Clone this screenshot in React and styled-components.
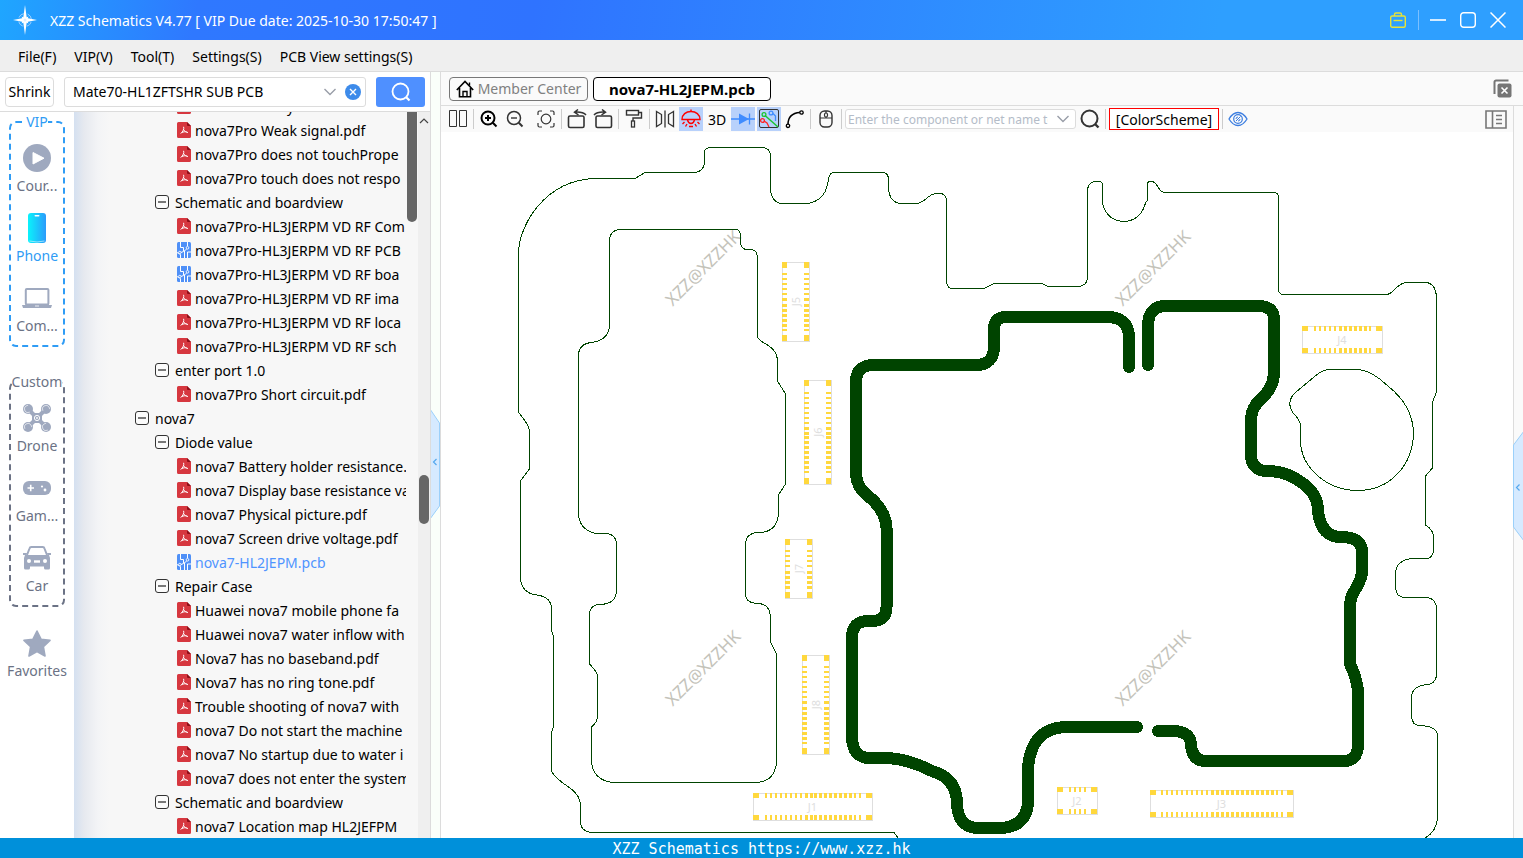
import React from "react";
import styled, { createGlobalStyle, css } from "styled-components";

const GlobalStyle = createGlobalStyle`
  *, *::before, *::after { box-sizing: border-box; }
  body { margin: 0; background: #fff; }
  body, button, input { font-family: "Noto Sans", "Open Sans", sans-serif; font-size: 14px; color: #000; }
  button { padding: 0; border: 0; background: none; cursor: pointer; }
  svg { display: block; flex: none; }
`;

const Page = styled.div`
  display: flex;
  flex-direction: column;
  height: 100vh;
  overflow: hidden;
`;

const TitleBar = styled.header`
  flex: none;
  display: flex;
  align-items: center;
  gap: 12px;
  height: 40px;
  padding: 0 16px 0 12px;
  color: #fff;
  background: linear-gradient(100deg, #1fa6ff 0%, #2f78ff 13%, #2f73ff 35%, #2e9fff 80%, #2e9fff 100%);
`;

const Title = styled.h1`
  flex: 1;
  margin: 0;
  font-size: 14px;
  font-weight: 400;
  white-space: nowrap;
`;

const WindowButtons = styled.div`
  display: flex;
  align-items: center;
  gap: 12px;
`;

const WindowButton = styled.button`
  display: grid;
  place-items: center;
  width: 18px;
  height: 20px;
`;

const WindowDivider = styled.span`
  width: 1px;
  height: 20px;
  margin: 0 -2px 0 -1px;
  background: #7cc0ff;
`;

const MenuBar = styled.nav`
  flex: none;
  display: flex;
  align-items: center;
  gap: 18px;
  height: 32px;
  padding: 2px 18px 0;
  background: #efefef;
  border-bottom: 1px solid #dcdcdc;
`;

const MenuItem = styled.button`
  white-space: nowrap;
`;

const Main = styled.div`
  flex: 1;
  display: flex;
  min-height: 0;
`;

const Sidebar = styled.aside`
  flex: none;
  display: flex;
  flex-direction: column;
  width: 431px;
  border-right: 1px solid #dcdcdc;
`;

const SearchRow = styled.div`
  flex: none;
  display: flex;
  align-items: center;
  gap: 10px;
  height: 40px;
  padding: 0 5px;
  border-bottom: 1px solid #dcdcdc;
`;

const ShrinkButton = styled.button`
  width: 49px;
  height: 30px;
  border: 1px solid #dcdcdc;
  border-radius: 4px;
`;

const ComboBox = styled.div`
  display: flex;
  align-items: center;
  border: 1px solid #dcdcdc;
  border-radius: 3px;
  background: #fff;
  ${(p) =>
    p.$small
      ? css`width: 231px; height: 20px; padding: 0 5px 0 2px; gap: 8px;`
      : css`flex: 1; height: 30px; padding: 0 4px 0 8px; gap: 8px;`}
`;

const ComboInput = styled.input`
  flex: 1;
  min-width: 0;
  padding: 0;
  border: 0;
  outline: 0;
  background: none;
  font-size: ${(p) => (p.$small ? "12px" : "14px")};
  &::placeholder { color: #b4bcc8; opacity: 1; }
`;

const SearchButton = styled.button`
  display: grid;
  place-items: center;
  width: 49px;
  height: 30px;
  border-radius: 3px;
  background: #4f90ff;
`;

const SidebarBody = styled.div`
  flex: 1;
  display: flex;
  min-height: 0;
`;

const Categories = styled.nav`
  flex: none;
  display: flex;
  flex-direction: column;
  align-items: center;
  width: 74px;
`;

const CategoryGroup = styled.fieldset`
  width: 56px;
  min-width: 0;
  margin: 0 0 25px;
  padding: 8px 0 9px;
  border: 2px dashed ${(p) => (p.$active ? "#2f9cf5" : "#6b7285")};
  border-radius: 7px;
  & + & { margin-bottom: 18px; }
`;

const CategoryTitle = styled.legend`
  margin: 0 auto;
  padding: 0;
  line-height: 20px;
  color: ${(p) => (p.$active ? "#2f9cf5" : "#6b7285")};
`;

const CategoryItems = styled.div`
  display: flex;
  flex-direction: column;
  align-items: center;
  gap: 14px;
`;

const Category = styled.button`
  display: flex;
  flex-direction: column;
  align-items: center;
  color: ${(p) => (p.$active ? "#2f9cf5" : "#6b7285")};
  line-height: 20px;
  white-space: nowrap;
`;

const CategoryIcon = styled.span`
  display: grid;
  place-items: center;
  height: 36px;
`;

const TreePane = styled.div`
  flex: 1;
  display: flex;
  min-width: 0;
  overflow: hidden;
  background: linear-gradient(90deg, #d4e0f0 0, #e6e9ef 10px, #f3f4f6 24px, #f7f7f7 36px);
`;

const Tree = styled.ul`
  flex: 1;
  min-width: 0;
  margin: -18px 0 0;
  padding: 0;
  list-style: none;
  overflow: hidden;
`;

const TreeRow = styled.li`
  padding-left: ${(p) => 61 + p.$level * 20 + (p.$level === 2 ? 2 : 0)}px;
  overflow: hidden;
`;

const TreeNode = styled.button`
  display: flex;
  align-items: center;
  gap: ${(p) => (p.$leaf ? 4 : 6)}px;
  height: 24px;
  white-space: nowrap;
  color: ${(p) => (p.$selected ? "#4f94ff" : "#000")};
`;

const InnerScroll = styled.div`
  flex: none;
  width: 12px;
  padding-left: 1px;
`;

const InnerThumb = styled.div`
  width: 10px;
  height: 110px;
  border-radius: 0 0 5px 5px;
  background: #666;
`;

const OuterScroll = styled.div`
  flex: none;
  display: flex;
  flex-direction: column;
  align-items: center;
  width: 12px;
  padding-top: 6px;
  background: #efefef;
`;

const OuterThumb = styled.div`
  width: 10px;
  height: 49px;
  margin-top: 351px;
  border-radius: 5px;
  background: #666;
`;

const Splitter = styled.div`
  flex: none;
  display: flex;
  align-items: center;
  width: 9px;
  padding-top: 18px;
  background: #fafffa;
`;

const Workspace = styled.main`
  flex: 1;
  display: flex;
  flex-direction: column;
  min-width: 0;
  border-left: 1px solid #dcdcdc;
`;

const TabBar = styled.div`
  flex: none;
  display: flex;
  align-items: center;
  gap: 5px;
  height: 34px;
  padding: 0 11px 0 8px;
  background: #fafafa;
  border-bottom: 1px solid #dcdcdc;
`;

const Tab = styled.button`
  display: flex;
  align-items: center;
  justify-content: center;
  gap: 4px;
  width: ${(p) => (p.$active ? 178 : 139)}px;
  height: 24px;
  border: 1px solid ${(p) => (p.$active ? "#000" : "#777")};
  border-radius: 4px;
  background: ${(p) => (p.$active ? "#fff" : "none")};
  color: ${(p) => (p.$active ? "#000" : "#808080")};
  font-size: ${(p) => (p.$active ? 15 : 14)}px;
  font-weight: ${(p) => (p.$active ? 700 : 400)};
  white-space: nowrap;
`;

const Spacer = styled.span`
  flex: 1;
`;

const BoardArea = styled.div`
  flex: 1;
  display: flex;
  min-height: 0;
`;

const BoardColumn = styled.div`
  flex: 1;
  display: flex;
  flex-direction: column;
  min-width: 0;
`;

const ToolBar = styled.div`
  flex: none;
  display: flex;
  align-items: center;
  gap: 2px;
  height: 26px;
  padding: 0 5px;
  background: #fafafa;
`;

const Tool = styled.button`
  display: grid;
  place-items: center;
  width: 24px;
  height: 24px;
  background: ${(p) => (p.$on ? "#b8d1fb" : "none")};
`;

const Separator = styled.span`
  width: 1px;
  height: 20px;
  margin: 0 1px;
  background: ${(p) => (p.$blank ? "none" : "#ccc")};
`;

const SchemeButton = styled.button`
  width: 110px;
  height: 22px;
  border: 1px solid #f00;
  background: #fff;
`;

const Board = styled.svg`
  flex: 1;
  width: 100%;
  min-height: 0;
  background: #fff;
`;

const RightGutter = styled.div`
  flex: none;
  display: flex;
  align-items: center;
  width: 10px;
  padding-top: 28px;
  background: #fafafa;
  box-shadow: inset 1px 0 #dcdcdc;
`;

const Footer = styled.footer`
  flex: none;
  height: 20px;
  background: #0090da;
  color: #fff;
  font: 15px/22px "DejaVu Sans Mono", monospace;
  text-align: center;
`;

/* ---------- icons ---------- */

const Svg = ({ w, h = w, children, ...rest }) => (
  <svg width={w} height={h} viewBox={`0 0 ${w} ${h}`} fill="none" aria-hidden="true" {...rest}>
    {children}
  </svg>
);

const Logo = () => (
  <Svg w={26} h={30}>
    <circle cx="13" cy="15" r="6.5" stroke="#9fd0ff" strokeWidth="1" strokeDasharray="6 4.2" strokeDashoffset="-2" />
    <path d="M13 0L14.8 12.9L25 15L14.8 17.1L13 30L11.2 17.1L1 15L11.2 12.9Z" fill="#fff" />
    <path d="M9.5 11.5L13 13L16.5 11.5L15 15L16.5 18.5L13 17L9.5 18.5L11 15Z" fill="#fff" />
    <circle cx="13" cy="15" r="1.5" fill="#d8ecff" />
  </Svg>
);

const PdfIcon = () => (
  <Svg w={14} h={16}>
    <path d="M1.5 0H10L14 4V14.5A1.5 1.5 0 0 1 12.5 16H1.5A1.5 1.5 0 0 1 0 14.5V1.5A1.5 1.5 0 0 1 1.5 0Z" fill="#d6373f" />
    <path d="M10 0L14 4H11A1 1 0 0 1 10 3Z" fill="#8e0f18" />
    <path d="M6.6 4.8C7.3 6.8 6 9.6 3.7 11.6M6.8 7.7C7.4 9.2 9 10.3 11 10.5M4.8 10.6C6.2 9.8 8.2 9.5 9.8 9.9" stroke="#fff" strokeWidth="1" />
  </Svg>
);

const PcbIcon = () => (
  <Svg w={14} h={16}>
    <rect width="14" height="16" rx="1.5" fill="#4f90f7" />
    <path d="M3.5 0V5.5H6.5V9.500L4 10.500M7.500 16V8.500L9.500 7.500M10.500 0V4M10.500 16V10H14M3.500 16V12.500L0 10.500" stroke="#fff" strokeWidth="1" />
    <circle cx="2.800" cy="10.500" r="1.200" fill="#4f90f7" stroke="#fff" strokeWidth="0.900" />
    <circle cx="10.500" cy="5.800" r="1.300" fill="#4f90f7" stroke="#fff" strokeWidth="0.900" />
  </Svg>
);

const Toggle = () => (
  <Svg w={14}>
    <rect x="0.5" y="0.5" width="13" height="13" rx="2.5" fill="#fbfbfb" stroke="#333" />
    <path d="M3 7H11" stroke="#222" strokeWidth="1.2" />
  </Svg>
);

const Chevron = ({ color = "#999ea8" }) => (
  <Svg w={14} h={10}>
    <path d="M1.5 2L7 7.5L12.5 2" stroke={color} strokeWidth="1.4" />
  </Svg>
);

const Magnifier = ({ color, size = 20, width = 1.8 }) => (
  <svg width={size} height={size} viewBox="0 0 20 20" fill="none" aria-hidden="true">
    <circle cx="9.5" cy="9.5" r="8" stroke={color} strokeWidth={width} />
    <path d="M15 15L18.5 18.5" stroke={color} strokeWidth={width + 0.4} />
  </svg>
);

const G = "#9fa9bf";

const CourseIcon = () => (
  <Svg w={28}>
    <circle cx="14" cy="14" r="14" fill={G} />
    <path d="M10 8.5V20L21 14.2Z" fill="#fff" stroke="#fff" strokeLinejoin="round" />
  </Svg>
);

const PhoneIcon = () => (
  <Svg w={18} h={30}>
    <defs>
      <linearGradient id="phone" x1="0" x2="1">
        <stop offset="0" stopColor="#0af3fb" />
        <stop offset="1" stopColor="#2b9bfb" />
      </linearGradient>
    </defs>
    <rect width="18" height="30" rx="3" fill="url(#phone)" />
    <rect x="6.5" y="2" width="5" height="1.6" rx="0.8" fill="#fff" />
    <path d="M1.5 28Q9 30 16.5 28" stroke="#c8f4ff" strokeWidth="0.7" />
  </Svg>
);

const LaptopIcon = () => (
  <Svg w={30} h={20}>
    <rect x="3.8" y="1" width="22.6" height="15.5" rx="1" stroke={G} strokeWidth="2" />
    <path d="M0 17H30L29 20H1Z" fill={G} />
    <path d="M13 18H17" stroke="#fff" strokeWidth="0.8" />
  </Svg>
);

const DroneIcon = () => (
  <Svg w={28}>
    <path d="M5 5L23 23M23 5L5 23" stroke={G} strokeWidth="4" />
    <rect x="9" y="9" width="10" height="10" rx="3" fill={G} />
    <circle cx="14" cy="14" r="2.6" stroke="#fff" />
    <circle cx="14" cy="14" r="0.9" fill="#fff" />
    {[[5, 5], [23, 5], [5, 23], [23, 23]].map(([x, y]) => (
      <g key={`${x}-${y}`}>
        <circle cx={x} cy={y} r="5" fill={G} />
        <circle cx={x} cy={y} r="3.600" stroke="#fff" strokeWidth="0.600" strokeDasharray="13 10" transform={`rotate(${x === y ? 60 : 150} ${x} ${y})`} />
      </g>
    ))}
  </Svg>
);

const GameIcon = () => (
  <Svg w={28} h={14}>
    <rect width="28" height="14" rx="6" fill={G} />
    <path d="M4.5 7H11M7.7 3.8V10.2" stroke="#fff" strokeWidth="1.6" />
    <circle cx="19" cy="5.5" r="1.1" fill="#fff" />
    <circle cx="22" cy="9" r="1.4" fill="#fff" />
  </Svg>
);

const CarIcon = () => (
  <Svg w={28} h={24}>
    <path d="M4 9L6.5 2.5A2 2 0 0 1 8.5 1H19.5A2 2 0 0 1 21.5 2.5L24 9" stroke={G} strokeWidth="2" />
    <path d="M0 7H4L3.5 9H24.5L24 7H28V9H26L27 12V22A1.5 1.5 0 0 1 25.500 23.500H22.500A1.500 1.500 0 0 1 21 22V20.500H7V22A1.500 1.500 0 0 1 5.500 23.500H2.500A1.500 1.500 0 0 1 1 22V12L2 9H0Z" fill={G} />
    <circle cx="6" cy="15" r="2" fill="#fff" />
    <circle cx="22" cy="15" r="2" fill="#fff" />
    <path d="M11 15.5H17" stroke="#fff" strokeWidth="2.4" />
  </Svg>
);

const StarIcon = () => (
  <Svg w={28} h={27}>
    <path d="M14 1L18 9.2L27 10.400L20.400 16.800L22 26L14 21.600L6 26L7.600 16.800L1 10.400L10 9.200Z" fill={G} stroke={G} strokeWidth="1.600" strokeLinejoin="round" />
  </Svg>
);

const K = "#333";

const PanesIcon = () => (
  <Svg w={20} h={18}>
    <path d="M1.5 0.500H8.500V16.500H1.500ZM11.500 0.500H18.500V16.500H11.500Z" stroke={K} />
  </Svg>
);
const ZoomIcon = ({ plus }) => (
  <Svg w={18}>
    <circle cx="8" cy="8" r="6.500" stroke={plus ? "#000" : K} strokeWidth={plus ? 2 : 1.500} />
    <path d={plus ? "M5 8H11M8 5V11" : "M5 8H11"} stroke={plus ? "#000" : K} strokeWidth={plus ? 2 : 1.400} />
    <path d="M12.800 12.800L16.500 16.500" stroke={plus ? "#000" : K} strokeWidth="2" />
  </Svg>
);
const FitIcon = () => (
  <Svg w={18}>
    <path d="M1 5V2.500A1.500 1.500 0 0 1 2.500 1H5M13 1H15.500A1.500 1.500 0 0 1 17 2.500V5M17 13V15.500A1.500 1.500 0 0 1 15.500 17H13M5 17H2.500A1.500 1.500 0 0 1 1 15.500V13" stroke={K} strokeWidth="1.200" />
    <circle cx="9" cy="9" r="4.800" stroke={K} strokeWidth="1.200" />
  </Svg>
);
const RotateIcon = ({ flip }) => (
  <Svg w={20} h={20} transform={flip ? "scale(-1 1)" : undefined}>
    <rect x="1.500" y="7" width="15.500" height="11.500" rx="1.500" stroke={K} strokeWidth="1.600" />
    <path d="M19 6Q16 2.500 8 3M11 0.500L7.500 3.200L11.500 6" stroke={K} strokeWidth="1.500" />
  </Svg>
);
const RollerIcon = () => (
  <Svg w={18} h={20}>
    <rect x="1.500" y="1.500" width="12" height="4.500" stroke={K} strokeWidth="1.400" />
    <path d="M13.500 3.500H16.500V9H8V12" stroke={K} strokeWidth="1.400" />
    <rect x="6.500" y="12" width="3" height="6" stroke={K} strokeWidth="1.300" />
  </Svg>
);
const MirrorIcon = () => (
  <Svg w={20} h={18}>
    <path d="M1.500 1.500L6.500 4.500V13.500L1.500 16.500ZM18.500 1.500L13.500 4.500V13.500L18.500 16.500Z" stroke={K} strokeWidth="1.300" />
    <path d="M10 0.500V17.500" stroke={K} strokeWidth="1.300" />
  </Svg>
);
const LampIcon = () => (
  <Svg w={20} h={20}>
    <path d="M1 10.500C1 5.500 5 2.500 10 2.500S19 5.500 19 10.500Z" stroke="#f00" strokeWidth="1.400" />
    <path d="M10 0.500V2.500M6.500 11Q7.500 14.500 10 14.500T13.500 11M3.500 13L1.500 15M16.500 13L18.500 15M6 15L4.500 17.500M14 15L15.500 17.500M8 17.500H12" stroke="#f00" strokeWidth="1.400" />
  </Svg>
);
const DiodeIcon = () => (
  <Svg w={24} h={20}>
    <path d="M0 10H24M18.500 4.500V15.500" stroke="#3f8cff" strokeWidth="1.300" />
    <path d="M8 4.500L18 10L8 15.500Z" fill="#3f8cff" />
  </Svg>
);
const RoutesIcon = () => (
  <Svg w={22} h={20}>
    <rect x="1.500" y="0.500" width="19" height="18" rx="1.500" stroke="#333" />
    <path d="M7 6.500L20 18" stroke="#1cc532" strokeWidth="1.500" />
    <circle cx="6" cy="5.500" r="1.900" stroke="#1cc532" strokeWidth="1.300" />
    <circle cx="13" cy="4" r="1.900" stroke="#3f8cff" strokeWidth="1.300" />
    <path d="M15 4.500L17.500 7V12" stroke="#3f8cff" strokeWidth="1.300" />
    <circle cx="4.500" cy="11.500" r="1.900" stroke="#f22" strokeWidth="1.300" />
    <path d="M6 12L9 14L11 18" stroke="#f22" strokeWidth="1.300" />
  </Svg>
);
const CurveIcon = () => (
  <Svg w={20} h={20}>
    <path d="M3 15.500C3 8 7 4 15 3.500" stroke="#000" strokeWidth="1.500" />
    <circle cx="3" cy="16.800" r="1.700" fill="#fff" stroke="#000" strokeWidth="1.300" />
    <circle cx="16.500" cy="3.500" r="1.700" fill="#fff" stroke="#000" strokeWidth="1.300" />
  </Svg>
);
const MouseIcon = () => (
  <Svg w={14} h={18}>
    <rect x="1" y="1" width="12" height="16" rx="4.500" stroke={K} strokeWidth="1.400" />
    <path d="M1 8H13M7 1V3M7 7V8" stroke={K} strokeWidth="1.200" />
    <rect x="5.500" y="3" width="3" height="4" rx="1.500" stroke={K} strokeWidth="1.200" />
  </Svg>
);
const EyeIcon = () => (
  <Svg w={20} h={16}>
    <path d="M1 8C4 3 7 1.500 10 1.500S16 3 19 8C16 13 13 14.500 10 14.500S4 13 1 8Z" stroke="#3b7de0" strokeWidth="1.300" />
    <circle cx="10" cy="8" r="4.300" stroke="#3b7de0" strokeWidth="1.200" />
    <path d="M8 10L12.500 5.500M8 8A2 2 0 0 1 10 6M12 8A2 2 0 0 1 10 10" stroke="#3b7de0" strokeWidth="1" />
  </Svg>
);
const HomeIcon = () => (
  <Svg w={18} h={18}>
    <path d="M0.800 10L9 1.500L17.200 10M3.500 8V16.800H14.500V8" stroke="#000" strokeWidth="1.600" />
    <path d="M7 16.500V11.500H11V16.500M13.500 5.500V2.500" stroke="#000" strokeWidth="1.400" />
  </Svg>
);
const CloseAllIcon = () => (
  <Svg w={19} h={19}>
    <path d="M1.500 15V3A1.500 1.500 0 0 1 3 1.500H15.500" stroke="#757575" strokeWidth="2" />
    <rect x="4.500" y="4.500" width="14" height="14" rx="2" fill="#757575" />
    <path d="M8.500 8.500L14.500 14.500M14.500 8.500L8.500 14.500" stroke="#fff" strokeWidth="1.600" />
  </Svg>
);
const PanelIcon = () => (
  <Svg w={22} h={19}>
    <path d="M1 1H21V18H1ZM7.500 1V18" stroke="#777" strokeWidth="1.600" />
    <path d="M11 5.500H17M11 9.500H15M11 13.500H17M15 9.500H17" stroke="#777" strokeWidth="1.500" />
  </Svg>
);
const BagIcon = () => (
  <Svg w={16} h={16}>
    <path d="M4.500 4V2.500A1.500 1.500 0 0 1 6 1H10A1.500 1.500 0 0 1 11.500 2.500V4" stroke="#e8e337" strokeWidth="1.400" />
    <rect x="0.700" y="4" width="14.600" height="11.200" rx="1.500" stroke="#e8e337" strokeWidth="1.400" />
    <path d="M3.500 8.500H12.500" stroke="#e8e337" strokeWidth="1.400" />
  </Svg>
);

const Handle = ({ flip }) => (
  <Svg w={10} h={112}>
    <path
      d={flip ? "M11 1L0.500 15V97L11 111Z" : "M-1 1L8.500 15V98L-1 111Z"}
      fill="#d6eaff"
      stroke="#9bd0fa"
    />
    <path d={flip ? "M6.500 54.500L3.500 57.500L6.500 60.500" : "M5.500 51L2.500 54L5.500 57"} stroke="#55a8ee" strokeWidth="1.200" />
  </Svg>
);

/* ---------- board drawing ---------- */

const OUTLINE =
  "M898 838L894 832.500H591Q581 831 580.500 823V805Q580 795 570 788Q552 776 551.500 770V732L553.500 727V636L551.500 631V608Q551 597 537 595Q521 593 520.500 578V481L529.500 469V430Q528 424 519 413L518.500 406V253C519 225 545 180 595 178.500H635L645 172.500H696Q704.500 170 704.500 162V152Q705 147.500 711 147.500H763Q770.500 148 770.500 157V190Q772 203.500 783 203.500H808Q827 200 828.500 178Q830 172.500 834 172.500H883Q888.500 173 888.500 180V189Q890 203.500 902 203.500H917C926 202 928 194 936 193.500Q946.500 192 946.500 201V282Q947 288.500 953 288.500H984L994 283.500H1042L1048 286.500H1078Q1087.500 286 1087.500 277V190Q1088 181.500 1097 181.500Q1102.500 181 1102.500 185V203Q1107 221.500 1125 221.500Q1141 220 1145.500 203L1147.500 200V183C1150 179 1156 182 1158 187Q1161 192.500 1165 192.500H1274Q1278.500 192.500 1278.500 198V290Q1279 294.500 1284 294.500H1387C1395 293 1396 283 1407 282.500H1426Q1435 283 1436.500 296V392L1432.500 402V468L1425.500 476V525Q1433.500 530 1433.500 537V550Q1433 558.500 1426 558.500H1411Q1396 561 1395.500 573V587Q1396 597.500 1405 597.500H1427Q1436 599 1436.500 608V676Q1435 684.500 1426 684.500Q1411.500 687 1411.500 697V716Q1412 725.500 1420 725.500Q1436 726 1437.500 735V819Q1436 832 1425 838";

const SHIELD =
  "M609.500 240Q610 229.500 621 229.500H737Q740.500 231 740.500 236V244Q742 249.500 747 249.500Q757 248 757.500 257V337C759 344 777.500 344 777.500 362V381L785.500 394V484L778.500 495V515Q776 533 758 532.500Q745.500 533 745.500 545V595Q746 603 758 603.500Q770 604 770.500 617V642L776.500 654V763Q774 782.500 755 782.500H613Q592 780 591.500 760V727Q597.500 722 597.500 716V675Q597 672 589.500 664V614Q590 604.500 600 604.500Q616.500 604 616.500 590V543Q615 533.500 606 533.500H596Q580 530 578.500 515V354Q580 343 592 342.500Q609 340 609.500 325Z";

const HOLE =
  "M1300.500 424Q1299 419 1293 413C1288 406 1289 398 1296 392L1314 377Q1322 369.500 1331 369.500H1359Q1372 371 1388 386Q1413 406 1413.500 433C1413 465 1390 490.500 1358 490.500S1300.500 467 1300.500 440Z";

const TRACK_A =
  "M1129 367V338Q1129 317 1107 317H1006Q994 317 994 329V346Q994 365 976 365H874Q856 365 856 382V475Q857 487 867 495Q886 510 886.500 528V606Q887 621 872 621H868Q852 621 852 638V738Q853 758 870 758H888Q908 759 932 771Q957 778 957 804Q958 828 979 828H1002Q1026 826 1028 803V768Q1031 728 1066 727H1137";

const TRACK_B =
  "M1148 365V324Q1149 306 1166 306H1261Q1274 307 1274 320V374Q1273 388 1262 398Q1251 407 1251 420V456Q1252 471 1268 471Q1286 471 1301 482Q1318 493 1318 511Q1321 537 1341 537Q1362 537 1362 552V573Q1361 580 1355 590Q1350 597 1350 607V664Q1358 681 1358 694V746Q1357 761 1344 761H1206Q1193 761 1191 746Q1191 731 1173 731H1158";

const CONNECTORS = [
  { id: "J5", x: 782, y: 262, len: 80, pads: 12, first: 11, vertical: true },
  { id: "J6", x: 804, y: 380, len: 105, pads: 17, first: 12, vertical: true },
  { id: "J7", x: 785, y: 539, len: 60, pads: 8, first: 11, vertical: true },
  { id: "J8", x: 802, y: 655, len: 100, pads: 16, first: 11, vertical: true },
  { id: "J1", x: 753, y: 793, len: 120, pads: 20, first: 12 },
  { id: "J2", x: 1057, y: 787, len: 41, pads: 4, first: 12 },
  { id: "J3", x: 1150, y: 790, len: 144, pads: 25, first: 11 },
  { id: "J4", x: 1302, y: 326, len: 81, pads: 12, first: 12 },
];

const Connector = ({ id, x, y, len, pads, first, vertical }) => {
  const pitch = (len - 2 * first - 2) / (pads - 1);
  const steps = Array.from({ length: pads }, (_, i) => ({
    at: Math.round(first + i * pitch),
    size: pads > 4 && i >= pads * 0.4 && i < pads * 0.9 ? 3 : 2,
  }));
  const pad = (along, across, size) =>
    vertical ? (
      <rect key={`${along}-${across}`} x={x + across} y={y + along} width="5" height={size} />
    ) : (
      <rect key={`${along}-${across}`} x={x + along} y={y + across} width={size} height="5" />
    );
  const [w, h] = vertical ? [27, len - 1] : [len - 1, 27];
  const cx = x + w / 2;
  const cy = y + h / 2;
  return (
    <g>
      <rect x={x + 0.5} y={y + 0.5} width={w} height={h} fill="none" stroke="#dedede" />
      <g fill="#ffd83d">
        {[0, 22].map((across) => [
          pad(0, across, 6),
          ...steps.map((s) => pad(s.at, across, s.size)),
          pad(len - 7, across, 6),
        ])}
      </g>
      <text
        x={cx}
        y={cy + 4}
        textAnchor="middle"
        fontSize="11"
        fill="#dedede"
        transform={vertical ? `rotate(-90 ${cx} ${cy})` : undefined}
      >
        {id}
      </text>
    </g>
  );
};

const WATERMARKS = [[703, 268], [1153, 268], [703, 668], [1153, 668]];

const BoardView = () => (
  <Board viewBox="441 132 1072 706" role="img" aria-label="nova7-HL2JEPM board view">
    {WATERMARKS.map(([x, y]) => (
      <text key={`${x}-${y}`} x={x} y={y + 6} textAnchor="middle" fontSize="17" fill="#c4c3ba" transform={`rotate(-45 ${x} ${y})`}>
        XZZ@XZZHK
      </text>
    ))}
    {CONNECTORS.map((c) => (
      <Connector key={c.id} {...c} />
    ))}
    <g fill="none" stroke="#004400" shapeRendering="crispEdges">
      <path d={OUTLINE} />
      <path d={SHIELD} />
      <path d={HOLE} />
      <g strokeWidth="12" strokeLinecap="round" strokeLinejoin="round">
        <path d={TRACK_A} />
        <path d={TRACK_B} />
      </g>
    </g>
  </Board>
);

/* ---------- data ---------- */

const TREE = [
  [2, "pdf", "nova7Pro Body measured value p"],
  [2, "pdf", "nova7Pro Weak signal.pdf"],
  [2, "pdf", "nova7Pro does not touchPrope"],
  [2, "pdf", "nova7Pro touch does not respo"],
  [1, "dir", "Schematic and boardview"],
  [2, "pdf", "nova7Pro-HL3JERPM VD RF Com"],
  [2, "pcb", "nova7Pro-HL3JERPM VD RF PCB"],
  [2, "pcb", "nova7Pro-HL3JERPM VD RF boa"],
  [2, "pdf", "nova7Pro-HL3JERPM VD RF ima"],
  [2, "pdf", "nova7Pro-HL3JERPM VD RF loca"],
  [2, "pdf", "nova7Pro-HL3JERPM VD RF sch"],
  [1, "dir", "enter port 1.0"],
  [2, "pdf", "nova7Pro Short circuit.pdf"],
  [0, "dir", "nova7"],
  [1, "dir", "Diode value"],
  [2, "pdf", "nova7 Battery holder resistance."],
  [2, "pdf", "nova7 Display base resistance va"],
  [2, "pdf", "nova7 Physical picture.pdf"],
  [2, "pdf", "nova7 Screen drive voltage.pdf"],
  [2, "pcb", "nova7-HL2JEPM.pcb", true],
  [1, "dir", "Repair Case"],
  [2, "pdf", "Huawei nova7 mobile phone fa"],
  [2, "pdf", "Huawei nova7 water inflow with"],
  [2, "pdf", "Nova7 has no baseband.pdf"],
  [2, "pdf", "Nova7 has no ring tone.pdf"],
  [2, "pdf", "Trouble shooting of nova7 with"],
  [2, "pdf", "nova7 Do not start the machine"],
  [2, "pdf", "nova7 No startup due to water i"],
  [2, "pdf", "nova7 does not enter the system"],
  [1, "dir", "Schematic and boardview"],
  [2, "pdf", "nova7 Location map HL2JEFPM"],
];

const NODE_ICONS = { pdf: PdfIcon, pcb: PcbIcon, dir: Toggle };

const GROUPS = [
  { title: "VIP", active: true, items: [["Cour...", CourseIcon], ["Phone", PhoneIcon, true], ["Com...", LaptopIcon]] },
  { title: "Custom", items: [["Drone", DroneIcon], ["Gam...", GameIcon], ["Car", CarIcon]] },
];

const MENUS = ["File(F)", "VIP(V)", "Tool(T)", "Settings(S)", "PCB View settings(S)"];

const CategoryButton = ({ label, Icon, active }) => (
  <Category type="button" $active={active}>
    <CategoryIcon><Icon /></CategoryIcon>
    {label}
  </Category>
);

export default function App() {
  return (
    <Page>
      <GlobalStyle />
      <TitleBar>
        <Logo />
        <Title>XZZ Schematics V4.77 [ VIP Due date: 2025-10-30 17:50:47 ]</Title>
        <WindowButtons>
          <WindowButton type="button" aria-label="Toolbox"><BagIcon /></WindowButton>
          <WindowDivider />
          <WindowButton type="button" aria-label="Minimize">
            <Svg w={16}><path d="M0 8H16" stroke="#fff" strokeWidth="1.600" /></Svg>
          </WindowButton>
          <WindowButton type="button" aria-label="Maximize">
            <Svg w={16}><rect x="0.700" y="0.700" width="14.600" height="14.600" rx="3" stroke="#fff" strokeWidth="1.400" /></Svg>
          </WindowButton>
          <WindowButton type="button" aria-label="Close">
            <Svg w={16}><path d="M0.500 0.500L15.500 15.500M15.500 0.500L0.500 15.500" stroke="#fff" strokeWidth="1.500" /></Svg>
          </WindowButton>
        </WindowButtons>
      </TitleBar>
      <MenuBar>
        {MENUS.map((m) => <MenuItem key={m} type="button">{m}</MenuItem>)}
      </MenuBar>
      <Main>
        <Sidebar>
          <SearchRow>
            <ShrinkButton type="button">Shrink</ShrinkButton>
            <ComboBox>
              <ComboInput aria-label="Search files" defaultValue="Mate70-HL1ZFTSHR SUB PCB" />
              <button type="button" aria-label="Show history"><Chevron /></button>
              <button type="button" aria-label="Clear">
                <Svg w={16}>
                  <circle cx="8" cy="8" r="8" fill="#3d8bea" />
                  <path d="M5 5L11 11M11 5L5 11" stroke="#fff" strokeWidth="1.400" />
                </Svg>
              </button>
            </ComboBox>
            <SearchButton type="button" aria-label="Search"><Magnifier color="#fff" /></SearchButton>
          </SearchRow>
          <SidebarBody>
            <Categories>
              {GROUPS.map((g) => (
                <CategoryGroup key={g.title} $active={g.active}>
                  <CategoryTitle $active={g.active}>{g.title}</CategoryTitle>
                  <CategoryItems>
                    {g.items.map(([label, Icon, active]) => (
                      <CategoryButton key={label} label={label} Icon={Icon} active={active} />
                    ))}
                  </CategoryItems>
                </CategoryGroup>
              ))}
              <CategoryButton label="Favorites" Icon={StarIcon} />
            </Categories>
            <TreePane>
              <Tree>
                {TREE.map(([level, kind, name, selected], i) => {
                  const Icon = NODE_ICONS[kind];
                  return (
                    <TreeRow key={i} $level={level}>
                      <TreeNode type="button" $leaf={kind !== "dir"} $selected={selected}>
                        <Icon />
                        {name}
                      </TreeNode>
                    </TreeRow>
                  );
                })}
              </Tree>
              <InnerScroll><InnerThumb /></InnerScroll>
              <OuterScroll>
                <Svg w={10} h={6}><path d="M1 5L5 1L9 5" stroke="#444" strokeWidth="1.200" /></Svg>
                <OuterThumb />
              </OuterScroll>
            </TreePane>
          </SidebarBody>
        </Sidebar>
        <Splitter><Handle /></Splitter>
        <Workspace>
          <TabBar>
            <Tab type="button"><HomeIcon />Member Center</Tab>
            <Tab type="button" $active>nova7-HL2JEPM.pcb</Tab>
            <Spacer />
            <button type="button" aria-label="Close all tabs"><CloseAllIcon /></button>
          </TabBar>
          <BoardArea>
            <BoardColumn>
              <ToolBar>
                <Tool type="button" aria-label="Split view"><PanesIcon /></Tool>
                <Separator />
                <Tool type="button" aria-label="Zoom in"><ZoomIcon plus /></Tool>
                <Tool type="button" aria-label="Zoom out"><ZoomIcon /></Tool>
                <Separator $blank />
                <Tool type="button" aria-label="Fit"><FitIcon /></Tool>
                <Separator />
                <Tool type="button" aria-label="Rotate left"><RotateIcon /></Tool>
                <Tool type="button" aria-label="Rotate right"><RotateIcon flip /></Tool>
                <Separator />
                <Tool type="button" aria-label="Paint"><RollerIcon /></Tool>
                <Separator />
                <Tool type="button" aria-label="Mirror"><MirrorIcon /></Tool>
                <Tool type="button" aria-label="Highlight" $on><LampIcon /></Tool>
                <Tool type="button">3D</Tool>
                <Tool type="button" aria-label="Diode values" $on><DiodeIcon /></Tool>
                <Tool type="button" aria-label="Routes" $on><RoutesIcon /></Tool>
                <Tool type="button" aria-label="Curve"><CurveIcon /></Tool>
                <Separator />
                <Tool type="button" aria-label="Mouse"><MouseIcon /></Tool>
                <Separator />
                <ComboBox $small>
                  <ComboInput $small aria-label="Component or net" placeholder="Enter the component or net name to search" />
                  <button type="button" aria-label="Show components"><Chevron /></button>
                </ComboBox>
                <Tool type="button" aria-label="Find"><Magnifier color={K} width={2} /></Tool>
                <Separator />
                <SchemeButton type="button">[ColorScheme]</SchemeButton>
                <Separator />
                <Tool type="button" aria-label="Visibility"><EyeIcon /></Tool>
                <Spacer />
                <Tool type="button" aria-label="Side panel"><PanelIcon /></Tool>
              </ToolBar>
              <BoardView />
            </BoardColumn>
            <RightGutter><Handle flip /></RightGutter>
          </BoardArea>
        </Workspace>
      </Main>
      <Footer>XZZ Schematics https://www.xzz.hk</Footer>
    </Page>
  );
}
